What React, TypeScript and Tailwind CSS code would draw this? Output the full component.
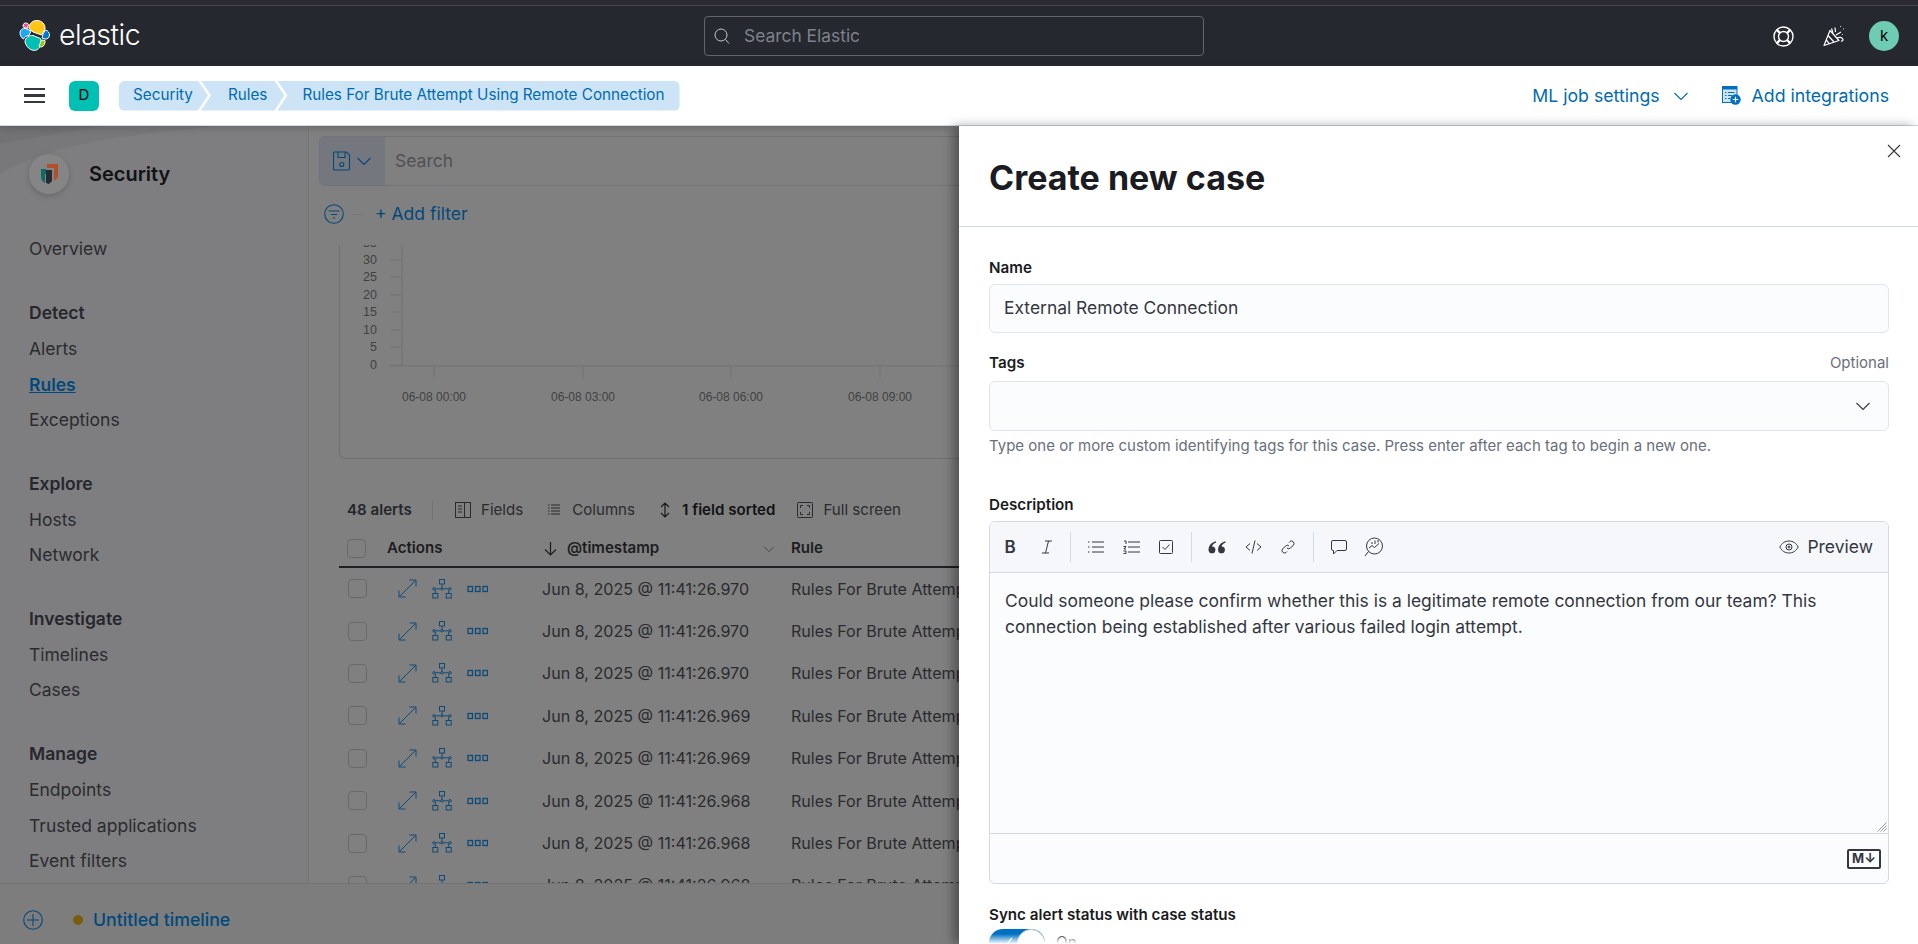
import React from 'react';

const SearchIcon = () => (
  <svg width="16" height="16" viewBox="0 0 16 16" fill="none" stroke="#c4c6ca" strokeWidth="1">
    <circle cx="7" cy="7" r="6" />
    <path d="M11.500 11.500 15 15.500" />
  </svg>
);

const ElasticLogo = () => (
  <svg width="32" height="32" viewBox="0 0 32 32">
    <path d="M10 8.5 C10 3 14 0.5 18 0.5 C23 0.5 26.5 4.5 26 9 L22.5 15 L14 12 Z" fill="#fec514" stroke="#fff" strokeWidth="1" />
    <path d="M6 22 C6 17.5 10.5 15 14 15.5 L21.5 18.5 C23 22 22 27 18.5 29.5 C14 32 8 29 6 22 Z" fill="#00bfb3" stroke="#fff" strokeWidth="1" />
    <path d="M1 12.5 C1 10 3.5 8 6.5 8.5 L12 11 L10 15.5 C7.5 15.5 5.5 17 4.5 19 C2.5 18 1 15.5 1 12.5 Z" fill="#1ba9f5" stroke="#fff" strokeWidth="1" />
    <path d="M5 3.5 C6.5 2.5 9 3 9.5 4.5 L8.5 8.5 L4 6.8 C4 5.5 4.2 4.2 5 3.5 Z" fill="#f04e98" stroke="#fff" strokeWidth="1" />
    <path d="M24 14 L26.5 10 C29 10.5 30.5 13 30.5 15 C30.5 17.5 28.5 19.5 26 19 L23 18 Z" fill="#0077cc" stroke="#fff" strokeWidth="1" />
    <path d="M22.5 20 L26 20.5 C26.5 23 25 26.5 22.5 27 C21 27 20.5 26.5 20 26 Z" fill="#93c90e" stroke="#fff" strokeWidth="1" />
  </svg>
);

const HelpIcon = () => (
  <svg width="21" height="21" viewBox="0 0 21 21" fill="none" stroke="#fff" strokeWidth="1.4">
    <circle cx="10.5" cy="10.5" r="9.5" />
    <circle cx="10.5" cy="10.5" r="5" />
    <path d="M3.8 3.8 7 7M17.2 3.8 14 7M3.8 17.2 7 14M17.2 17.2 14 14" strokeWidth="2.4" />
  </svg>
);

const PartyIcon = () => (
  <svg width="22" height="22" viewBox="0 0 22 22" fill="none" stroke="#fff" strokeWidth="1.2">
    <path d="M7 5.5 1 20.5 16 15.5 Z" strokeLinejoin="round" />
    <path d="M5 10.5 11 17M3.2 15 6.500 18.8M8.500 3.500 10 8M12 2.500 12.500 7M13 10 18 7M14 13c2-1 5-1 6 1.500 0 1-1 2-2 1.500" />
    <path d="M17 1.500h.8M20 4h.8M19 9.500h.8" strokeDasharray="1 1" />
  </svg>
);

const Chevron = ({ size = 16, color = '#006bb4' }: { size?: number; color?: string }) => (
  <svg width={size} height={size} viewBox="0 0 16 16" fill="none" stroke={color} strokeWidth="1.1">
    <path d="M1.500 5 8 11.500 14.500 5" />
  </svg>
);

const IntegrationsIcon = () => (
  <svg width="19" height="19" viewBox="0 0 19 19" fill="none">
    <rect x="0.5" y="0.5" width="14.5" height="16" fill="#cfe3f3" stroke="#0071c2" strokeWidth="1" />
    <path d="M0.5 1h14.500v2.500H0.5z" fill="#0071c2" />
    <path d="M3 6.500h1.500M6 6.500h6.500M3 9.500h1.500M6 9.500h4M3 12.500h1.500M6 12.500h2" stroke="#0071c2" strokeWidth="1" />
    <circle cx="13.5" cy="13.5" r="5.2" fill="#0071c2" />
    <path d="M13.500 10.800v5.400M10.800 13.500h5.400" stroke="#fff" strokeWidth="1.2" />
  </svg>
);

const SaveIcon = () => (
  <svg width="18" height="20" viewBox="0 0 18 20" fill="none" stroke="#00497c" strokeWidth="1.1">
    <path d="M1.500 1h12l3 3v14a1 1 0 0 1-1 1h-14a1 1 0 0 1-1-1V2a1 1 0 0 1 1-1z" />
    <path d="M5 1v5.500h7V1" />
    <circle cx="8.8" cy="13.5" r="2" />
  </svg>
);

const FilterIcon = () => (
  <svg width="20" height="20" viewBox="0 0 20 20" fill="none" stroke="#00497c" strokeWidth="1.1">
    <circle cx="10" cy="10" r="9.3" />
    <path d="M4.500 7h11M6.800 10.500h6.400M8.800 14h2.400" />
  </svg>
);

const FieldsIcon = () => (
  <svg width="16" height="16" viewBox="0 0 16 16" fill="none" stroke="#2a2b2e" strokeWidth="1">
    <rect x="0.5" y="0.5" width="15" height="15" />
    <path d="M9.500.5v15M3 4h4M3 7h4M3 10h4" />
  </svg>
);

const ColumnsIcon = () => (
  <svg width="14" height="14" viewBox="0 0 14 14" fill="none" stroke="#2a2b2e" strokeWidth="1">
    <path d="M1 2h1.500M4 2h9M1 5h1.500M4 5h9M1 8h1.500M4 8h9M1 11h1.500M4 11h9" />
  </svg>
);

const SortIcon = () => (
  <svg width="12" height="16" viewBox="0 0 12 16" fill="none" stroke="#1a1b1d" strokeWidth="1.2">
    <path d="M2 5 6 1l4 4M2 11l4 4 4-4M6 2v12" />
  </svg>
);

const FullScreenIcon = () => (
  <svg width="16" height="16" viewBox="0 0 16 16" fill="none" stroke="#2a2b2e" strokeWidth="1">
    <rect x="0.5" y="0.5" width="15" height="15" rx="1" />
    <path d="M3.500 6V3.500H6M10 3.500h2.500V6M12.500 10v2.500H10M6 12.500H3.500V10" />
  </svg>
);

const ExpandIcon = () => (
  <svg width="19" height="19" viewBox="0 0 19 19" fill="none" stroke="#0e4a78" strokeWidth="1">
    <path d="M1.500 17.500 17.500 1.500M11.500 1h6.500v6.500M1 11.500V18h6.500" />
  </svg>
);

const TreeIcon = () => (
  <svg width="20" height="20" viewBox="0 0 20 20" fill="none" stroke="#0e4a78" strokeWidth="1">
    <rect x="7.5" y="0.5" width="5" height="4.5" />
    <rect x="0.8" y="14.5" width="5" height="4.5" />
    <rect x="14.2" y="14.5" width="5" height="4.5" />
    <circle cx="2" cy="9.8" r="1.2" />
    <circle cx="10" cy="9.8" r="1.2" />
    <circle cx="18" cy="9.8" r="1.2" />
    <path d="M10 5v3.500M3.200 9.800h5.600M11.200 9.800h5.600M3.300 11v3.500M16.700 11v3.500" />
  </svg>
);

const DotsIcon = () => (
  <svg width="21" height="8" viewBox="0 0 21 8" fill="none" stroke="#0e4a78" strokeWidth="1.3">
    <rect x="1" y="1.5" width="4.5" height="5" />
    <rect x="8.5" y="1.5" width="4.5" height="5" />
    <rect x="16" y="1.5" width="4.5" height="5" />
  </svg>
);

const CheckBox = () => <div className="w-[19px] h-[19px] rounded-[4px] border border-[#6a6a6b] bg-[#808080] shrink-0" />;

const rows = ['970', '970', '970', '969', '969', '968', '968', '968'];

const ChartAxis = () => {
  const ticks = [[30, 260], [25, 277], [20, 295], [15, 312], [10, 330], [5, 347], [0, 365]];
  const labels = [[433, '06-08 00:00'], [582, '06-08 03:00'], [730, '06-08 06:00'], [879, '06-08 09:00']] as const;
  return (
    <svg width="620" height="214" viewBox="339 245 620 214" className="block">
      <path d="M401 245V366M389 366H959" stroke="#737374" fill="none" />
      <text x="376" y="247" textAnchor="end" fontFamily="Liberation Sans" fontSize="12.5" fill="#414142">35</text>
      {ticks.map(([v, y]) => (
        <g key={v}>
          <path d={`M389 ${y}H401`} stroke="#737374" />
          <text x="376" y={y + 4} textAnchor="end" fontFamily="Liberation Sans" fontSize="12.5" fill="#414142">{v}</text>
        </g>
      ))}
      {labels.map(([x, t]) => (
        <g key={t}>
          <path d={`M${x} 366V378`} stroke="#737374" />
          <text x={x} y="401" textAnchor="middle" fontFamily="Liberation Sans" fontSize="12" fill="#414142">{t}</text>
        </g>
      ))}
    </svg>
  );
};

const NavSection = ({ title, items }: { title: string; items: string[] }) => (
  <div className="mt-[27.700px]">
    <div className="h-[37px] flex items-center text-[17.500px] font-semibold text-[#25272c]">{title}</div>
    {items.map((item) => (
      <div
        key={item}
        className={item === 'Rules' ? 'h-[35.300px] flex items-center text-[17.500px] font-semibold text-[#00497c]' : 'h-[35.300px] flex items-center text-[17.500px] text-[#2a2b2e]'}
      >
        <span className={item === 'Rules' ? 'underline' : ''}>{item}</span>
      </div>
    ))}
  </div>
);

const ToolIcon = ({ children, className = '' }: { children: React.ReactNode; className?: string }) => (
  <div className={`w-[16px] h-[16px] flex items-center justify-center shrink-0 ${className}`}>{children}</div>
);

const Toolbar = () => (
  <div className="flex items-center h-[50px] pl-[12px] text-[#343741]">
    <ToolIcon><span className="text-[17px] font-semibold leading-none">B</span></ToolIcon>
    <ToolIcon className="ml-[21px]">
      <svg width="12" height="14" viewBox="0 0 12 14" fill="none" stroke="#343741" strokeWidth="1">
        <path d="M4 1h7M1 13h7M7.500 1 4.500 13" />
      </svg>
    </ToolIcon>
    <div className="w-px h-[30px] bg-[#d3dae6] ml-[15px]" />
    <ToolIcon className="ml-[17px]">
      <svg width="16" height="14" viewBox="0 0 16 14" fill="none" stroke="#343741" strokeWidth="1">
        <path d="M0 2h1.500M4 2h12M0 7h1.500M4 7h12M0 12h1.500M4 12h12" />
      </svg>
    </ToolIcon>
    <ToolIcon className="ml-[19px]">
      <svg className="shrink-0" width="17" height="14" viewBox="0 0 17 14" fill="none" stroke="#343741">
        <path d="M1 1h2v3M0.500 6.500h2.500L1 9h2M0.500 11h2.500v2.500H0.500M5 2h12M5 7h12M5 12h12" />
      </svg>
    </ToolIcon>
    <ToolIcon className="ml-[19px]">
      <svg width="14" height="14" viewBox="0 0 14 14" fill="none" stroke="#343741">
        <rect x="0.5" y="0.5" width="13" height="13" rx="1" />
        <path d="M3.500 7 6 9.500l4.500-5" />
      </svg>
    </ToolIcon>
    <div className="w-px h-[30px] bg-[#d3dae6] ml-[17px]" />
    <ToolIcon className="ml-[17px]">
      <svg className="shrink-0" width="18" height="14" viewBox="0 0 17 13" fill="#343741">
        <path d="M7.500 1C3.500 2 .5 5 .5 9c0 2 1.300 3.500 3.300 3.500S7 11 7 9 5.500 6 3.900 6C4 4.500 5.500 3 7.500 2.500zM16.500 1C12.500 2 9.500 5 9.500 9c0 2 1.300 3.500 3.300 3.500S16 11 16 9s-1.500-3-3.100-3C13 4.500 14.500 3 16.500 2.500z" />
      </svg>
    </ToolIcon>
    <ToolIcon className="ml-[20px]">
      <svg className="shrink-0" width="17" height="14" viewBox="0 0 17 14" fill="none" stroke="#343741">
        <path d="M5 3.500 1 7l4 3.500M12 3.500 16 7l-4 3.500M10 .5 7 13.500" />
      </svg>
    </ToolIcon>
    <ToolIcon className="ml-[19px]">
      <svg width="14" height="14" viewBox="0 0 14 14" fill="none" stroke="#343741">
        <path d="M6 8a2.500 2.500 0 0 0 3.500 0l3-3A2.500 2.500 0 0 0 9 1.500l-1 1M8 6a2.500 2.500 0 0 0-3.500 0l-3 3A2.500 2.500 0 0 0 5 12.500l1-1" />
      </svg>
    </ToolIcon>
    <div className="w-px h-[30px] bg-[#d3dae6] ml-[17px]" />
    <ToolIcon className="ml-[17px]">
      <svg width="16" height="15" viewBox="0 0 16 15" fill="none" stroke="#343741">
        <path d="M2 .5h12A1.500 1.500 0 0 1 15.500 2v7a1.500 1.500 0 0 1-1.500 1.500H6L2.500 14v-3.500H2A1.500 1.500 0 0 1 .5 9V2A1.500 1.500 0 0 1 2 .5z" />
      </svg>
    </ToolIcon>
    <ToolIcon className="ml-[19px]">
      <svg className="shrink-0" width="20" height="20" viewBox="0 0 20 20" fill="none" stroke="#343741">
        <circle cx="10.500" cy="9" r="8" />
        <path d="M4.500 14.500 1 19M5 11l3-2.500 2.500 2 4.500-4M8 5v2M11 3.500V7M14 3v2.500" />
      </svg>
    </ToolIcon>
    <div className="ml-auto flex items-center gap-[8px] pr-[15px] text-[17.500px]">
      <svg width="20" height="14" viewBox="0 0 20 14" fill="none" stroke="#343741">
        <path d="M.8 7C3 3 6 1 10 1s7 2 9.200 6c-2.200 4-5.200 6-9.200 6S3 11 .8 7z" />
        <circle cx="10" cy="7" r="3" />
        <circle cx="10" cy="7" r="1" />
      </svg>
      <span>Preview</span>
    </div>
  </div>
);

const FlyoutLabel = ({ children, optional }: { children: React.ReactNode; optional?: boolean }) => (
  <div className="flex items-center justify-between h-[20px] text-[15.200px]">
    <span className="font-semibold text-[#1a1c21]">{children}</span>
    {optional && <span className="text-[#69707d] text-[15px]">Optional</span>}
  </div>
);

export default function App() {
  return (
    <div className="relative w-full h-screen overflow-hidden flex flex-col bg-[#808080]" style={{ fontFamily: 'Inter, "Liberation Sans", sans-serif' }}>
      {/* browser strip */}
      <div className="h-[6px] shrink-0 bg-[#2b2a33] border-b border-[#45454c]" />

      {/* dark header */}
      <header className="h-[60px] shrink-0 bg-[#25282f] flex items-center pl-[19px] pr-[19px] relative">
        <ElasticLogo />
        <span className="ml-[8px] text-[28.500px] font-light leading-none text-white tracking-[-0.500px] pb-[2px]">elastic</span>
        <div className="absolute left-[704px] top-[10px] w-[500px] h-[40px] rounded-[4px] border border-[#62656b] flex items-center pl-[9px] gap-[14px]">
          <SearchIcon />
          <span className="text-[17.400px] text-[#7d828b]">Search Elastic</span>
        </div>
        <div className="ml-auto flex items-center">
          <HelpIcon />
          <div className="ml-[29px]"><PartyIcon /></div>
          <div className="ml-[24px] w-[30px] h-[30px] rounded-full bg-[#6dccb1] flex items-center justify-center text-[15px] text-black">k</div>
        </div>
      </header>

      {/* breadcrumb bar */}
      <div className="h-[60px] shrink-0 bg-white border-b border-[#d3dae6] shadow-[0_2px_8px_rgba(0,0,0,0.18)] flex items-center pl-[24px] pr-[29px] relative z-20">
        <div className="flex flex-col gap-[4px] w-[21px]">
          <div className="h-[2.500px] bg-[#343741]" />
          <div className="h-[2.500px] bg-[#343741]" />
          <div className="h-[2.500px] bg-[#343741]" />
        </div>
        <div className="ml-[24px] w-[30px] h-[30px] rounded-[6px] bg-[#00bfb3] flex items-center justify-center text-[15px] text-black">D</div>
        <div className="ml-[20px] flex items-center text-[15.250px] text-[#006bb4] h-[30px] whitespace-nowrap">
          <div className="h-full flex items-center pl-[14px] pr-[15px] bg-[#cce4f5] rounded-l-[6px]" style={{ clipPath: 'polygon(0 0, calc(100% - 10px) 0, 100% 50%, calc(100% - 10px) 100%, 0 100%)' }}>Security</div>
          <div className="h-full flex items-center pl-[27px] pr-[17px] bg-[#cce4f5] -ml-[7px]" style={{ clipPath: 'polygon(0 0, calc(100% - 10px) 0, 100% 50%, calc(100% - 10px) 100%, 0 100%, 10px 50%)' }}>Rules</div>
          <div className="h-full flex items-center pl-[25px] pr-[15px] bg-[#cce4f5] -ml-[7px] rounded-r-[6px]" style={{ clipPath: 'polygon(0 0, 100% 0, 100% 100%, 0 100%, 10px 50%)' }}>Rules For Brute Attempt Using Remote Connection</div>
        </div>
        <div className="ml-auto flex items-center text-[17.700px] text-[#006bb4] pt-[1px]">
          <span>ML job settings</span>
          <div className="ml-[13px]"><Chevron /></div>
          <div className="ml-[33px]"><IntegrationsIcon /></div>
          <span className="ml-[11px]">Add integrations</span>
        </div>
      </div>

      {/* page behind the flyout */}
      <div className="flex-1 min-h-0 flex">
        <aside className="w-[309px] shrink-0 bg-[#7e7e80] border-r border-[#767678] pl-[29px] relative overflow-hidden">
          <svg className="absolute left-0 top-0" width="308" height="60" viewBox="0 0 308 60">
            <path d="M0 0H215C150 8 60 12 0 48Z" fill="#78787b" />
            <path d="M0 0H100C70 6 30 12 0 18Z" fill="#727275" />
          </svg>
          <div className="relative flex items-center h-[96px]">
            <div className="w-[40px] h-[40px] rounded-full bg-[#858586] shadow-[0_2px_6px_rgba(0,0,0,0.18)] flex items-center justify-center">
              <svg width="17" height="20" viewBox="0 0 17 20">
                <path d="M6 0h11v11c0 3-2 4.500-4 5.500V4H6z" fill="#b04f28" />
                <path d="M0 5h5v5H4v9C2 18 0 16 0 12z" fill="#0f6a66" />
                <path d="M5 6h6v11l-3 3-3-1z" fill="#262a31" />
              </svg>
            </div>
            <span className="ml-[20px] text-[20px] font-semibold text-[#111214]">Security</span>
          </div>
          <div className="h-[35px] mt-[10px] flex items-center text-[17.500px] text-[#2a2b2e]">Overview</div>
          <NavSection title="Detect" items={['Alerts', 'Rules', 'Exceptions']} />
          <NavSection title="Explore" items={['Hosts', 'Network']} />
          <NavSection title="Investigate" items={['Timelines', 'Cases']} />
          <NavSection title="Manage" items={['Endpoints', 'Trusted applications', 'Event filters']} />
        </aside>

        <main className="flex-1 min-w-0 overflow-hidden bg-[#808080]">
          <div className="h-[119px] pl-[10px] pt-[10px]">
            <div className="h-[50px] rounded-l-[6px] border border-[#6e7380] flex overflow-hidden">
              <div className="w-[65px] bg-[#74777e] flex items-center justify-center gap-[5px]">
                <SaveIcon />
                <Chevron color="#00497c" />
              </div>
              <div className="pl-[10px] flex items-center text-[17.500px] text-[#505154]">Search</div>
            </div>
            <div className="mt-[15px] flex items-center">
              <div className="ml-[5px]"><FilterIcon /></div>
              <div className="ml-[7px] w-[13px] h-px bg-[#747577]" />
              <span className="ml-[11px] text-[17.500px] text-[#00497c]">+ Add filter</span>
            </div>
          </div>

          <div className="ml-[30px] w-[680px] h-[214px] border-l border-b border-[#6f7071] rounded-bl-[6px] overflow-hidden">
            <ChartAxis />
          </div>

          <div className="ml-[38px] h-[40px] mt-[31px] flex items-center text-[15.100px] text-[#2a2b2e] whitespace-nowrap">
            <span className="font-semibold w-[64px] text-[#25272c]">48 alerts</span>
            <div className="ml-[21px] w-px h-[20px] bg-[#737476]" />
            <div className="ml-[22px]"><FieldsIcon /></div>
            <span className="ml-[10px]">Fields</span>
            <div className="ml-[24px]"><ColumnsIcon /></div>
            <span className="ml-[11px]">Columns</span>
            <div className="ml-[24px]"><SortIcon /></div>
            <span className="ml-[11px] font-semibold text-[#111214]">1 field sorted</span>
            <div className="ml-[22px]"><FullScreenIcon /></div>
            <span className="ml-[10px]">Full screen</span>
          </div>

          <div className="ml-[30px] mt-[2px] w-[700px] h-[35.500px] flex items-center border-b-2 border-[#1f2125] text-[15.100px] font-semibold text-[#1c1d20] whitespace-nowrap">
            <div className="ml-[8px]"><CheckBox /></div>
            <span className="ml-[21px] w-[70px] shrink-0">Actions</span>
            <svg className="ml-[87px] shrink-0" width="13" height="14" viewBox="0 0 13 14" fill="none" stroke="#1c1d20" strokeWidth="1.2">
              <path d="M6.500 0v13M1 7.500 6.500 13 12 7.500" />
            </svg>
            <span className="ml-[10px] w-[196px] shrink-0">@timestamp</span>
            <div className="shrink-0"><Chevron size={12} color="#3a3b3d" /></div>
            <span className="ml-[16px]">Rule</span>
          </div>

          {rows.map((ms, i) => (
            <div key={i} className="ml-[30px] w-[1000px] h-[42.400px] flex items-center text-[16.100px] text-[#2a2b2e] whitespace-nowrap">
              <div className="ml-[9px]"><CheckBox /></div>
              <div className="ml-[31px] shrink-0"><ExpandIcon /></div>
              <div className="ml-[15px] shrink-0"><TreeIcon /></div>
              <div className="ml-[15px] shrink-0"><DotsIcon /></div>
              <span className="ml-[54px] w-[249px] shrink-0">Jun 8, 2025 @ 11:41:26.{ms}</span>
              <span>Rules For Brute Attempt Using Remote Connection</span>
            </div>
          ))}
        </main>
      </div>

      {/* timeline bar */}
      <div className="h-[61px] shrink-0 bg-[#7d7d7e] border-t border-[#747475] relative z-10 flex items-center pl-[23px] pt-[12px]">
        <svg width="20" height="20" viewBox="0 0 20 20" fill="none" stroke="#00497c" strokeWidth="1.1">
          <circle cx="10" cy="10" r="9.300" />
          <path d="M10 4v12M4 10h12" />
        </svg>
        <div className="ml-[30px] w-[10px] h-[10px] rounded-full bg-[#7a5d0d]" />
        <span className="ml-[10px] text-[17.700px] font-medium text-[#00497c]">Untitled timeline</span>
      </div>

      {/* create case flyout */}
      <div className="absolute right-0 top-[126px] bottom-0 w-[959px] z-30 bg-white shadow-[-6px_0_10px_rgba(0,0,0,0.35)] overflow-hidden">
        <button className="absolute right-[17px] top-[18px]">
          <svg className="block" width="14" height="14" viewBox="0 0 14 14" fill="none" stroke="#343741" strokeWidth="1.100">
            <path d="M1 1l12 12M13 1 1 13" />
          </svg>
        </button>
        <div className="h-[101px] border-b border-[#d3dae6] pl-[30px] pt-[32px]">
          <h1 className="text-[34px] leading-[40px] font-bold text-[#1a1c21]">Create new case</h1>
        </div>
        <div className="px-[30px] pt-[31px] pr-[29px]">
          <FlyoutLabel>Name</FlyoutLabel>
          <div className="mt-[6px] h-[49px] rounded-[6px] border border-[#e0e5ee] bg-[#fbfcfd] flex items-center pl-[14px] text-[17.450px] text-[#343741]">External Remote Connection</div>
          <div className="mt-[20px]"><FlyoutLabel optional>Tags</FlyoutLabel></div>
          <div className="mt-[8px] h-[50px] rounded-[6px] border border-[#e0e5ee] bg-[#fbfcfd] flex items-center justify-end pr-[17px]">
            <Chevron color="#343741" />
          </div>
          <div className="mt-[5px] text-[15px] leading-[20px] text-[#69707d]">Type one or more custom identifying tags for this case. Press enter after each tag to begin a new one.</div>
          <div className="mt-[39px]"><FlyoutLabel>Description</FlyoutLabel></div>
          <div className="mt-[6px] h-[363px] rounded-[6px] border border-[#d3dae6] bg-[#fbfcfd] overflow-hidden flex flex-col">
            <div className="h-[51px] shrink-0 bg-[#f5f7fa] border-b border-[#d3dae6]"><Toolbar /></div>
            <div className="h-[261px] shrink-0 border-b border-[#d3dae6] px-[15px] pt-[15px] text-[17.450px] leading-[26px] text-[#343741] relative">
              Could someone please confirm whether this is a legitimate remote connection from our team? This connection being established after various failed login attempt.
              <svg className="absolute right-[1px] bottom-[1px]" width="10" height="10" viewBox="0 0 10 10" stroke="#9a9a9a" fill="none">
                <path d="M9.500 .5 .5 9.500M9.500 3.500l-6 6M9.500 6.500l-3 3" />
              </svg>
            </div>
            <div className="flex-1 flex items-center justify-end pr-[7px]">
              <div className="w-[34px] h-[20px] rounded-[2px] border-2 border-[#343741] flex items-center justify-center text-[13px] font-bold leading-none text-[#343741]">M↓</div>
            </div>
          </div>
          <div className="mt-[21px]"><FlyoutLabel>Sync alert status with case status</FlyoutLabel></div>
          <div className="mt-[4px] flex items-center">
            <div className="w-[56px] h-[28px] rounded-full bg-[#0071c2] relative shrink-0">
              <svg className="absolute left-[10px] top-[8px]" width="14" height="12" viewBox="0 0 14 12" fill="none" stroke="#fff" strokeWidth="1.200">
                <path d="M1 6l4 4.500L13 1" />
              </svg>
              <div className="absolute right-0 top-0 w-[28px] h-[28px] rounded-full bg-white border border-[#c5ccd8]" />
            </div>
            <span className="ml-[11px] text-[15.300px] text-[#343741]">On</span>
          </div>
        </div>
        <div className="absolute left-0 right-0 bottom-0 h-[10px] bg-gradient-to-t from-white to-transparent" />
      </div>
    </div>
  );
}
